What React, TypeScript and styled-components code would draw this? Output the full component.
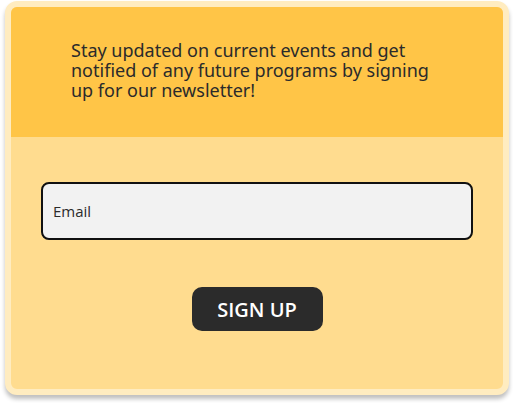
import React from "react";
import styled, { createGlobalStyle } from "styled-components";

const GlobalStyle = createGlobalStyle`
  *, *::before, *::after { box-sizing: border-box; }
  body { margin: 0; background: #fff; font-family: "Open Sans", sans-serif; color: #2b2b2b; }
`;

const Page = styled.main`
  padding: 1px 4px 8px 5px;
`;

const Card = styled.section`
  display: flex;
  flex-direction: column;
  overflow: hidden;
  border: 6px solid #ffecc0;
  border-radius: 12px;
  background: #ffdc8f;
  box-shadow: 0 4px 4px rgba(0, 0, 0, 0.25);
`;

const Banner = styled.header`
  padding: 33px 60px 37px;
  background: #ffc547;
`;

const Message = styled.p`
  max-width: 372px;
  margin: 0;
  font-family: "Noto Sans", "Open Sans", sans-serif;
  font-size: 18px;
  line-height: 20px;
`;

const Form = styled.form`
  display: flex;
  flex-direction: column;
  align-items: center;
  gap: 47px;
  padding: 45px 30px 58px;
`;

const EmailInput = styled.input`
  width: 100%;
  height: 58px;
  padding: 0 10px;
  border: 2px solid #111;
  border-radius: 8px;
  background: #f2f2f2;
  color: #2b2b2b;
  font: 400 15px "Open Sans", sans-serif;
  &::placeholder { color: #2b2b2b; opacity: 1; }
`;

const SubmitButton = styled.button`
  width: 131px;
  height: 44px;
  padding: 0;
  border: 0;
  border-radius: 10px;
  background: #2b2b2b;
  color: #fff;
  font: 600 20px "Open Sans", sans-serif;
  cursor: pointer;
`;

export default function App() {
  return (
    <>
      <GlobalStyle />
      <Page>
        <Card>
          <Banner>
            <Message>
              Stay updated on current events and get notified of any future programs by signing up for our newsletter!
            </Message>
          </Banner>
          <Form onSubmit={(event: React.FormEvent) => event.preventDefault()}>
            <EmailInput type="email" name="email" placeholder="Email" aria-label="Email" />
            <SubmitButton type="submit">SIGN UP</SubmitButton>
          </Form>
        </Card>
      </Page>
    </>
  );
}
